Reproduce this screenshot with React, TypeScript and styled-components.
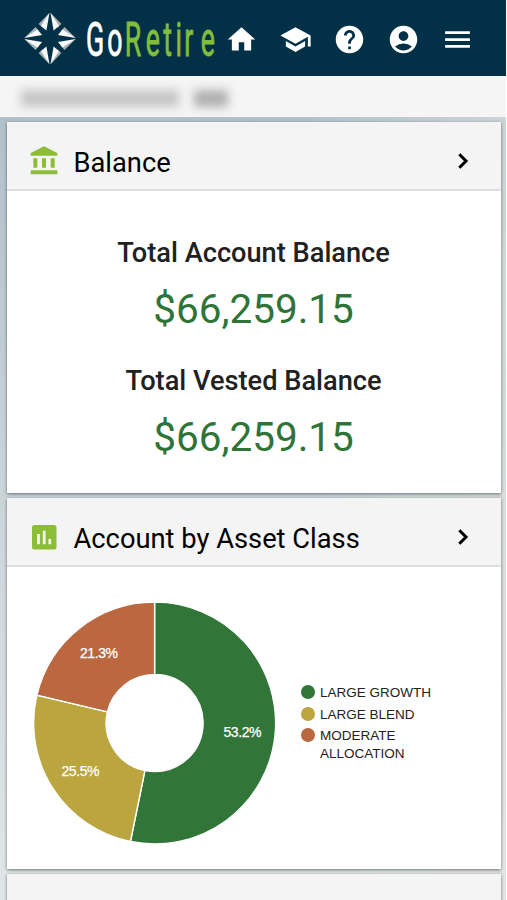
import React from "react";
import styled, { createGlobalStyle } from "styled-components";
import {
  MdHome,
  MdSchool,
  MdHelp,
  MdAccountCircle,
  MdMenu,
  MdAccountBalance,
} from "react-icons/md";

const GlobalStyle = createGlobalStyle`
  * { box-sizing: border-box; }
  body {
    margin: 0;
    background: #fff;
    font-family: Roboto, sans-serif;
    overflow: hidden;
  }
`;

const Page = styled.div`
  width: 506px;
  height: 900px;
  display: flex;
  flex-direction: column;
  overflow: hidden;
`;

const TopBar = styled.header`
  flex: none;
  height: 76px;
  background: #023147;
  display: flex;
  align-items: center;
  padding: 3px 0 0 22px;
`;

const Brand = styled.svg`
  flex: none;
  display: block;
  margin-top: -3px;
`;

const BrandText = styled.text`
  font-family: Roboto, sans-serif;
  font-weight: 400;
  font-size: 48.5px;
  fill: #fff;
  stroke: #fff;
  stroke-width: 0.9;
`;

const BrandAccent = styled.tspan`
  fill: #82be3d;
  stroke: #82be3d;
`;

const Nav = styled.nav`
  display: flex;
  gap: 21px;
  margin-left: 3px;
`;

const NavButton = styled.button`
  border: 0;
  padding: 0;
  background: none;
  color: #fff;
  width: 33px;
  height: 33px;
  font-size: 33px;
  display: flex;
`;

const AccountBar = styled.div`
  flex: none;
  height: 41px;
  background: #f5f5f5;
  display: flex;
  align-items: center;
  gap: 15px;
  padding: 4px 0 0 21px;
`;

const Redacted = styled.div<{ $width: number; $tone: string }>`
  width: ${(p) => p.$width}px;
  height: 17px;
  background: ${(p) => p.$tone};
  filter: blur(5px);
`;

const Content = styled.main`
  flex: 1;
  min-height: 0;
  overflow: hidden;
  display: flex;
  flex-direction: column;
  gap: 5px;
  padding: 5px 5.5px 0 6.5px;
  background:
    linear-gradient(90deg, transparent 60%, rgba(226, 228, 224, 0.55)),
    linear-gradient(180deg, #b1c1cb, #ccd5da 50%, #e0e6e8);
`;

const Card = styled.section`
  flex: none;
  height: 371px;
  background: #fff;
  box-shadow: 0 1px 3px rgba(0, 0, 0, 0.5);
  display: flex;
  flex-direction: column;
`;

const CardHeader = styled.header`
  flex: none;
  height: 69px;
  background: #f4f4f4;
  border-bottom: 2px solid #dcdedf;
  display: flex;
  align-items: center;
  padding: 11px 22px 0 21px;
`;

const CardIcon = styled.span`
  display: flex;
  width: 32px;
  height: 32px;
  font-size: 32px;
  color: #8cbd36;
`;

const CardTitle = styled.h2`
  flex: 1;
  margin: 3px 0 0 14px;
  font-size: 27.3px;
  line-height: 32px;
  font-weight: 400;
  color: #000;
`;

const ChevronSvg = styled.svg`
  flex: none;
  display: block;
`;

const Balances = styled.div`
  display: flex;
  flex-direction: column;
  align-items: center;
  padding-top: 44px;
`;

const BalanceLabel = styled.div`
  font-size: 27.2px;
  line-height: 36px;
  font-weight: 500;
  color: #212121;
`;

const BalanceValue = styled.div`
  font-size: 40.5px;
  line-height: 56px;
  margin: 10px 0 26px;
  color: #2f7437;
`;

const ChartRow = styled.div`
  display: flex;
  padding: 34px 0 0 26px;
`;

const SliceLabel = styled.text`
  font-family: "Liberation Sans", Arial, sans-serif;
  font-size: 14px;
  fill: #fff;
  stroke: #fff;
  stroke-width: 0.25;
  text-anchor: middle;
`;

const Legend = styled.ul`
  list-style: none;
  margin: 83px 0 0 24.5px;
  padding: 0;
  display: flex;
  flex-direction: column;
  gap: 4px;
`;

const LegendItem = styled.li`
  display: flex;
  gap: 5px;
  width: 140px;
  font-family: "Liberation Sans", Arial, sans-serif;
  font-size: 13.5px;
  line-height: 17.6px;
  color: #222;
`;

const Dot = styled.span<{ $color: string }>`
  flex: none;
  width: 14px;
  height: 14px;
  margin-top: 1px;
  border-radius: 50%;
  background: ${(p) => p.$color};
`;

const SLICES = [
  { label: "LARGE GROWTH", value: 53.2, color: "#317539", x: 214.5, y: 136.2 },
  { label: "LARGE BLEND", value: 25.5, color: "#bba53e", x: 52.5, y: 175 },
  { label: "MODERATE ALLOCATION", value: 21.3, color: "#bb673f", x: 71, y: 57 },
];

const CX = 126.6;
const CY = 122;
const OUTER = 121;
const INNER = 48.5;

const point = (r: number, pct: number) => {
  const a = (pct / 100) * Math.PI * 2;
  return `${(CX + r * Math.sin(a)).toFixed(2)} ${(CY - r * Math.cos(a)).toFixed(2)}`;
};

const slicePath = (from: number, to: number) => {
  const large = to - from > 50 ? 1 : 0;
  return `M${point(OUTER, from)} A${OUTER} ${OUTER} 0 ${large} 1 ${point(OUTER, to)} L${point(
    INNER,
    to
  )} A${INNER} ${INNER} 0 ${large} 0 ${point(INNER, from)} Z`;
};

function Donut() {
  let start = 0;
  return (
    <svg width="244" height="244" viewBox="5 0 244 244">
      {SLICES.map((s) => {
        const d = slicePath(start, start + s.value);
        start += s.value;
        return <path key={s.label} d={d} fill={s.color} stroke="#fff" strokeWidth="1.4" />;
      })}
      {SLICES.map((s) => (
        <SliceLabel key={s.label} x={s.x} y={s.y} textLength="38">
          {`${s.value}%`}
        </SliceLabel>
      ))}
    </svg>
  );
}

function Logo() {
  return (
    <Brand width="200" height="76" viewBox="22 0 200 76">
      {[0, 90, 180, 270].map((deg) => (
        <g key={deg} transform={`rotate(${deg} 50 38.5)`}>
          <path d="M49.5 12.8 L38.6 24 L42.6 27.4 Z" fill="#a9b0b5" />
          <path d="M49.5 12.8 L41 26 L46.4 30.6 Z" fill="#f8f9f9" />
          <path d="M50.5 12.8 L61.4 24 L57.4 27.4 Z" fill="#a9b0b5" />
          <path d="M50.5 12.8 L59 26 L53.6 30.6 Z" fill="#f8f9f9" />
        </g>
      ))}
      <g transform="scale(0.55 1)">
        <BrandText x="156.5 195" y="56">
          Go
          <BrandAccent x="227 265 297 319 335 365">Retire</BrandAccent>
        </BrandText>
      </g>
    </Brand>
  );
}

function AssetIcon() {
  return (
    <svg width="32" height="32" viewBox="0 0 32 32">
      <rect x="4" y="4" width="24.5" height="24.5" rx="2.6" fill="#8cbd36" />
      <path d="M10.5 13v10.2M16.2 9.8v13.4M21.8 18v5.2" stroke="#f6f9ee" strokeWidth="2.7" />
    </svg>
  );
}

function Chevron() {
  return (
    <ChevronSvg width="32" height="32" viewBox="0 0 32 32">
      <path d="M12.3 9.3 L19 16 L12.3 22.7" fill="none" stroke="#000" strokeWidth="3" />
    </ChevronSvg>
  );
}

function SectionHeader({ icon, title }: { icon: React.ReactNode; title: string }) {
  return (
    <CardHeader>
      <CardIcon>{icon}</CardIcon>
      <CardTitle>{title}</CardTitle>
      <Chevron />
    </CardHeader>
  );
}

export default function App() {
  return (
    <Page>
      <GlobalStyle />
      <TopBar>
        <Logo />
        <Nav>
          <NavButton aria-label="Home"><MdHome /></NavButton>
          <NavButton aria-label="Education"><MdSchool /></NavButton>
          <NavButton aria-label="Help"><MdHelp /></NavButton>
          <NavButton aria-label="Profile"><MdAccountCircle /></NavButton>
          <NavButton aria-label="Menu"><MdMenu /></NavButton>
        </Nav>
      </TopBar>
      <AccountBar>
        <Redacted $width={158} $tone="#c6c6c6" />
        <Redacted $width={34} $tone="#b0b0b0" />
      </AccountBar>
      <Content>
        <Card>
          <SectionHeader icon={<MdAccountBalance />} title="Balance" />
          <Balances>
            <BalanceLabel>Total Account Balance</BalanceLabel>
            <BalanceValue>$66,259.15</BalanceValue>
            <BalanceLabel>Total Vested Balance</BalanceLabel>
            <BalanceValue>$66,259.15</BalanceValue>
          </Balances>
        </Card>
        <Card>
          <SectionHeader icon={<AssetIcon />} title="Account by Asset Class" />
          <ChartRow>
            <Donut />
            <Legend>
              {SLICES.map((s) => (
                <LegendItem key={s.label}>
                  <Dot $color={s.color} />
                  <span>{s.label}</span>
                </LegendItem>
              ))}
            </Legend>
          </ChartRow>
        </Card>
        <Card>
          <CardHeader />
        </Card>
      </Content>
    </Page>
  );
}
